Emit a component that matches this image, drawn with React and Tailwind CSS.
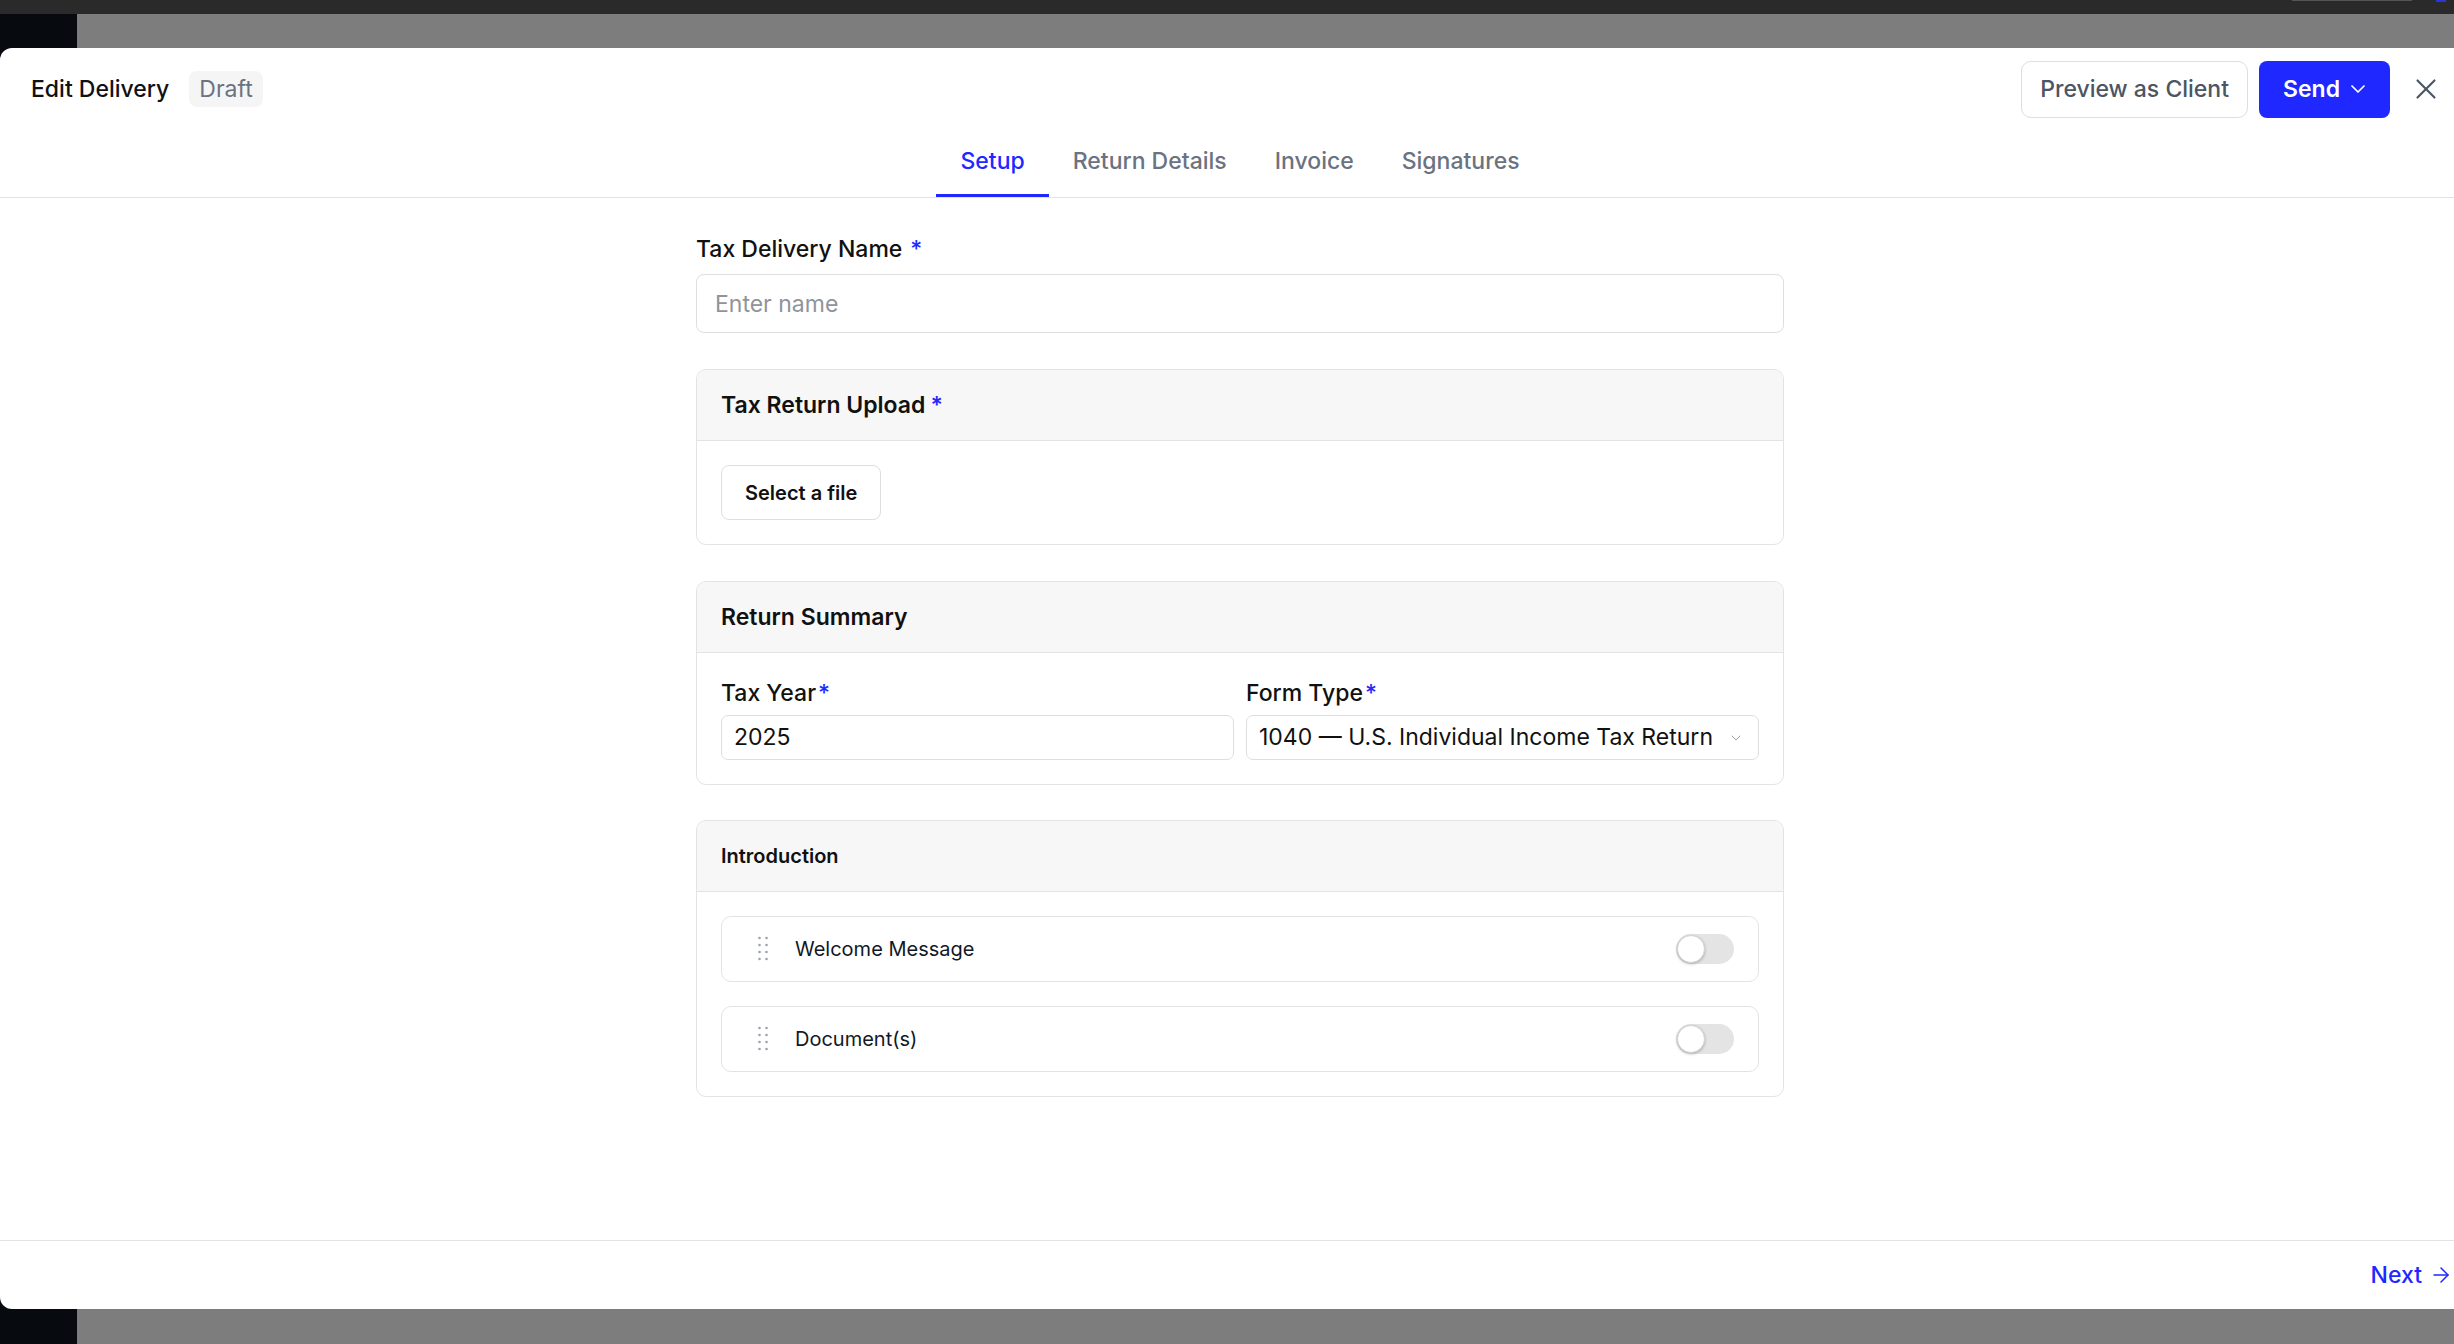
import React from 'react';
import { X, ChevronDown, ArrowRight } from 'lucide-react';

const BLUE = 'text-[#1e28ff]';

const Req = ({ gap = 'ml-[2px]' }) => <span className={`${BLUE} ${gap}`}>*</span>;

const GripDots = () => (
    <svg width="10" height="26" viewBox="0 0 10 26" className="shrink-0">
        {[2, 9, 16, 23].map((y) => (
            <g key={y} fill="#9ca3af">
                <circle cx="1.5" cy={y} r="1.3" />
                <circle cx="8.5" cy={y} r="1.3" />
            </g>
        ))}
    </svg>
);

const Toggle = () => (
    <div className="w-[58px] h-[30px] rounded-full bg-[#e4e4e4] flex items-center pl-[1px] shrink-0">
        <div className="w-[28px] h-[28px] rounded-full bg-white border border-[#d4d4d4] shadow-[0_1px_3px_rgba(0,0,0,0.25)]" />
    </div>
);

const Card = ({ title, small = false, children }) => (
    <section className="border border-[#e3e3e3] rounded-[10px] overflow-hidden">
        <header className="h-[71px] bg-[#f7f7f7] border-b border-[#e3e3e3] flex items-center px-[24px]">
            <h2 className={`font-semibold text-[#111111] ${small ? 'text-[20px]' : 'text-[23px]'}`}>{title}</h2>
        </header>
        <div className="p-[24px]">{children}</div>
    </section>
);

const IntroRow = ({ label }) => (
    <div className="h-[66px] border border-[#e3e3e3] rounded-[10px] flex items-center pl-[36px] pr-[24px]">
        <GripDots />
        <span className="ml-[27px] text-[20px] text-[#111827]">{label}</span>
        <div className="flex-1" />
        <Toggle />
    </div>
);

const tabs = ['Setup', 'Return Details', 'Invoice', 'Signatures'];

export default function App() {
    return (
        <div className="relative w-full h-[1344px] overflow-hidden bg-[#808080] font-['Inter','Liberation_Sans',sans-serif]">
            {/* backdrop behind the dialog */}
            <div className="h-[14px] bg-[#2a2a2a] flex justify-end items-start pr-[8px]">
                <div className="w-[120px] h-[1px] bg-[#555555] mr-[24px]" />
                <div className="w-[10px] h-[2px] bg-[#2a34d8]" />
            </div>
            <div className="flex h-[1330px]">
                <div className="w-[77px] bg-[#070a0f]" />
                <div className="flex-1 bg-[#7d7d7d]" />
            </div>

            {/* dialog */}
            <div className="absolute left-0 top-[48px] w-[2480px] h-[1261px] bg-white rounded-[12px] flex flex-col text-[#111111]">
                <div className="flex items-center h-[58px] mt-[12px] pl-[31px] pr-[37px]">
                    <h1 className="text-[23px] font-medium text-[#0f1115]">Edit Delivery</h1>
                    <span className="ml-[20px] px-[10px] h-[36px] flex items-center rounded-[8px] bg-[#f5f5f5] text-[23px] text-[#6b7280]">
                        Draft
                    </span>
                    <div className="flex-1" />
                    <button className="h-[57px] px-[18px] rounded-[10px] border border-[#dedede] text-[23px] font-medium text-[#4b5563] bg-white">
                        Preview as Client
                    </button>
                    <button className="ml-[11px] h-[57px] pl-[24px] pr-[20px] rounded-[8px] bg-[#1e28ff] text-white text-[23px] font-semibold flex items-center gap-[6px]">
                        Send
                        <ChevronDown size={24} strokeWidth={1.75} />
                    </button>
                    <button className="ml-[19px] text-[#4b5563]">
                        <X size={34} strokeWidth={1.5} />
                    </button>
                </div>

                <nav className="flex justify-center border-b border-[#e3e3e3]">
                    {tabs.map((t, i) => (
                        <div
                            key={t}
                            className={`px-[24px] pt-[27px] pb-[17px] leading-[32px] text-[23px] font-medium border-b-[3px] ${
                                i === 0 ? 'text-[#1e28ff] border-[#1e28ff]' : 'text-[#6b7280] border-transparent'
                            }`}
                        >
                            {t}
                        </div>
                    ))}
                </nav>

                <main className="flex-1">
                    <div className="w-[1088px] mx-auto pt-[35px] flex flex-col">
                        <label className="text-[23px] leading-[32px] font-medium text-[#111111]">
                            Tax Delivery Name
                            <Req gap="ml-[8px]" />
                        </label>
                        <input
                            placeholder="Enter name"
                            className="mt-[9px] h-[59px] px-[18px] rounded-[8px] border border-[#dedede] text-[23px] placeholder:text-[#8f949b] outline-none"
                        />

                        <div className="mt-[36px]">
                            <Card title={<>Tax Return Upload<Req gap="ml-[5px]" /></>}>
                                <button className="h-[55px] px-[23px] rounded-[8px] border border-[#dedede] text-[20px] font-semibold text-[#111111]">
                                    Select a file
                                </button>
                            </Card>
                        </div>

                        <div className="mt-[36px]">
                            <Card title="Return Summary">
                                <div className="grid grid-cols-2 gap-x-[12px]">
                                    <div className="flex flex-col">
                                        <span className="text-[23px] leading-[33px] font-medium">
                                            Tax Year<Req />
                                        </span>
                                        <div className="mt-[5px] h-[45px] px-[12px] rounded-[7px] border border-[#dedede] flex items-center text-[23px]">
                                            2025
                                        </div>
                                    </div>
                                    <div className="flex flex-col">
                                        <span className="text-[23px] leading-[33px] font-medium">
                                            Form Type<Req />
                                        </span>
                                        <div className="mt-[5px] h-[45px] pl-[12px] pr-[14px] rounded-[7px] border border-[#dedede] flex items-center text-[23px]">
                                            <span className="flex-1">1040 — U.S. Individual Income Tax Return</span>
                                            <ChevronDown size={16} strokeWidth={1.5} className="text-[#9ca3af]" />
                                        </div>
                                    </div>
                                </div>
                            </Card>
                        </div>

                        <div className="mt-[35px]">
                            <Card title="Introduction" small>
                                <div className="flex flex-col gap-[24px]">
                                    <IntroRow label="Welcome Message" />
                                    <IntroRow label="Document(s)" />
                                </div>
                            </Card>
                        </div>
                    </div>
                </main>

                <footer className="h-[69px] border-t border-[#e3e3e3] flex items-center justify-end pr-[27px]">
                    <button className="flex items-center gap-[7px] text-[23px] font-medium text-[#1e28ff]">
                        Next
                        <ArrowRight size={24} strokeWidth={1.5} />
                    </button>
                </footer>
            </div>
        </div>
    );
}
